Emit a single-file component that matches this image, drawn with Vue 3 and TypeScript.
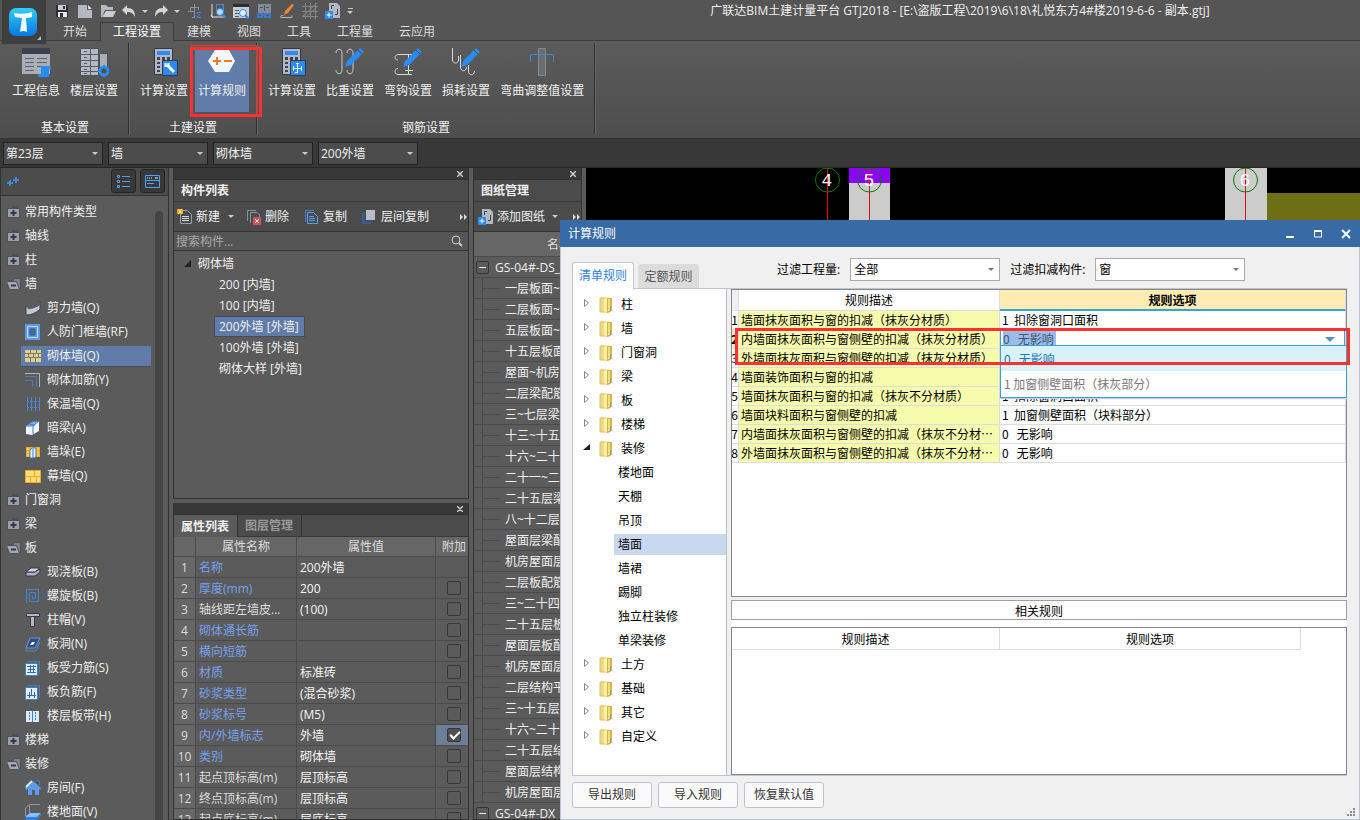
<script setup lang="ts">
import { ref } from 'vue'

interface SideRow {
  text: string
  icon: string
  child?: boolean
  active?: boolean
}
interface RibbonItem {
  text: string
  icon: string
  active?: boolean
}
interface PropRow {
  name: string
  value: string
  blue: boolean
  check: boolean | null
}
interface RuleRow {
  desc: string
  option: string
}

const pencil = '<path d="M10 20 12 14 25 1 29 5 16 18z" fill="#2a8bf2"/><path d="M23 3 27 7" stroke="#4d4d4d"/>'
const calc =
  '<path d="M5.500 1.500h18v26h-18z" fill="#b4b8c2" stroke="#333947"/><path d="M8 4h13v4H8z" fill="#2a8bf2"/><path d="M8 10h3v3H8zM13 10h3v3h-3zM18 10h3v3h-3zM8 15h3v2H8zM13 15h3v2h-3zM8 19h3v2H8zM8 23h3v2H8z" fill="#3e434e"/><path d="M13.500 13.500h15v15h-15z" fill="#2a8bf2" stroke="#333947"/>'

const icons: Record<string, string> = {
  save: '<path d="M2 2h11l1 1v11H2z" fill="#2b2e35"/><path d="M4 2h8v5H4z" fill="#c9ccd3"/><path d="M4 9h9v5H4z" fill="#e5e7ea"/><path d="M6 10h3v4H6z" fill="#333"/><path d="M9 3h2v3H9z" fill="#333"/>',
  file: '<path d="M1 2h9v5h5v8H1z" fill="#b4b8c2"/><path d="M11 2v4h4z" fill="#d8dae0"/>',
  open: '<path d="M1 2h5l2 2h5v3H5l-3 7H1z" fill="#b4b8c2"/><path d="M6 8h10l-3 6H2z" fill="#c9ccd3"/>',
  undo: '<path d="M1 7l5-5v3c6 0 8 3 8 9-2-4-4-5-8-5v3z" fill="#d2d5da"/>',
  redo: '<path d="M15 7l-5-5v3c-6 0-8 3-8 9 2-4 4-5 8-5v3z" fill="#d2d5da"/>',
  sum: '<path d="M7.500 1v13M3 4.500h9M3.500 4v4M11.500 4v3M1 8.500h6M5 14.500h3" stroke="#8b919c" fill="none"/><path d="M14 9.500H9.500l3 2.500-3 2.500h4.500" fill="none" stroke="#2a8bf2"/>',
  pick: '<path d="M2 1v13h12M1 12l2 3" stroke="#e3e5e8" fill="none"/><path d="M6 1h8v8H6z" fill="#5d87b5"/><path d="M7 3h6M7 5h6M7 7h6M8 2v7M11 2v7" stroke="#37485e"/><circle cx="10" cy="9" r="3.500" fill="#c9d6e6" stroke="#2a8bf2"/><path d="M12 11l4 4" stroke="#2a8bf2" stroke-width="2"/>',
  view: '<path d="M0 1h16v14H0z" fill="#c9ccd3"/><path d="M0 1h16v3H0z" fill="#2b2e35"/><path d="M2 7.500h4M2 10.500h4M2 13.500h4" stroke="#555"/><circle cx="10" cy="10" r="3.500" fill="#e7f3ff" stroke="#2a8bf2"/><path d="M12 12l4 4" stroke="#2a8bf2" stroke-width="2"/>',
  glasses: '<path d="M2 1h13v9H2z" fill="#868c97"/><path d="M4 4.500h3M8.500 2v6M10 4.500h3" stroke="#4c525e"/><path d="M2 11h4v3H2zM9 11h5v3H9zM6 12h3" fill="none" stroke="#3a7bc4" stroke-width="2"/>',
  brush: '<path d="M13 1l2 1-6 8-4 2 1-4z" fill="#f0862d"/><path d="M1.500 14.500c0-2 1-2 3-2M2 14.500h11v-2" stroke="#b4b8c2" fill="none"/>',
  grid: '<path d="M3.500 0v16M8.500 0v16M13.500 0v16M0 3.500h16M0 8.500h16M0 13.500h16M0 14 15 0M3 15 16 3" stroke="#858585" fill="none"/>',
  addpage: '<path d="M4 0h8l3 3v12H4z" fill="#b4b8c2"/><path d="M6.500 6V2.500H9M12.500 6v5.500H10" stroke="#444" fill="none"/><path d="M0 8h8v8H0z" fill="#2a8bf2"/><path d="M4 9.500v5M1.500 12h5" stroke="#fff"/>',
  info: '<path d="M1 1h28v26H1z" fill="#aaaeb7"/><path d="M1 1h28v6H1z" fill="#3b4150"/><path d="M4 11.500h9M4 15.500h9M4 19.500h9M4 23.500h9M16 11.500h10M16 15.500h10M16 19.500h4" stroke="#596070"/><path d="M20 19h10v3h-2v8H17v-3h3z" fill="#2a8bf2"/>',
  floors: '<path d="M1.500 1.500h18v27h-18z" fill="#b4b8c2" stroke="#4b505b"/><path d="M20.500 6.500h8v22h-8z" fill="#aaaeb7" stroke="#4b505b"/><path d="M1 7.500h18M1 13.500h18M1 19.500h18M1 24.500h18M11.500 1v28M5 4.500h3M5 10.500h3M5 16.500h3M5 22.500h3M5 26.500h3" stroke="#555a65"/><circle cx="25" cy="24" r="4" fill="#4d4d4d" stroke="#2a8bf2" stroke-width="3"/><path d="M25 18v2M25 28v2M19 24h2M29 24h2" stroke="#2a8bf2" stroke-width="2"/>',
  calcWrench: calc + '<path d="M18 18l7 7" stroke="#fff" stroke-width="3"/><path d="M16.500 16v3h3v-3" stroke="#fff" stroke-width="2" fill="none"/>',
  calcFork: calc + '<path d="M20.500 16v10M16 21.500h9M16.500 21v-2M16.500 22v2M24.500 19v5M19 16.500h3M18 25.500h3" stroke="#fff" fill="none"/>',
  hexa: '<path d="M8 3h14l6 11-6 11H8L1 14z" fill="#f1f7ff"/><path d="M6 14h8M10 10v8M17 14h8" stroke="#f07a1c" stroke-width="2"/><path d="M3 29.500h24" stroke="#3f8ae0"/>',
  weight: '<path d="M1 6c0-5 6-5 6 0v17c0 5-6 5-6 0M12 6c0-5 6-5 6 0v17c0 5-6 5-6 0" fill="none" stroke="#c8ccd4"/>' + pencil,
  hook: '<path d="M19 7.500H5C1 8 1 13 5 13M19 27.500H5c-4 0-4-6 0-6M15.500 8v20M11 17.500h4M12 23.500h8" fill="none" stroke="#d4d7dc"/>' + pencil,
  loss: '<path d="M1.500 1v12c0 4 6 4 6 0V9M9.500 8v12c0 5 6 5 6 0M17.500 18v6c0 5 6 5 6 0" fill="none" stroke="#d4d7dc"/>' + pencil,
  bend: '<path d="M11.500 1.500h7v27h-7z" fill="#676f74" stroke="#838b90"/><path d="M3.500 15V7.500h23V15" fill="none" stroke="#3d89d6"/>',
  closed: '<path d="M6 2h6v2H6z" fill="#4a505c"/><path d="M1.500 4.500h12v9h-12z" fill="#9a9ea8" stroke="#4a505c"/><path d="M7.500 6v6M4.500 9h6" stroke="#333844" stroke-width="2"/>',
  opened: '<path d="M2.500 4.500h5v-2h7v10h-4" fill="#7e838e" stroke="#4a505c"/><path d="M0.500 5.500h10l3 8h-10z" fill="#a4a8b2" stroke="#4a505c"/><path d="M5 9.500h5" stroke="#333844" stroke-width="2"/>',
  shear: '<path d="M1 6c6 1 10-1 14-5v8c-4 4-9 6-14 6z" fill="#c3c9d4" stroke="#3d4250"/><path d="M1 5c6 1 9-1 13-4l2 3c-4 4-9 5-13 5z" fill="#555b69"/>',
  frame: '<path d="M0 0h15v16H0z" fill="#5b9bea"/><path d="M2.500 2.500h10v11h-10z" fill="none" stroke="#bddbff"/><path d="M5 5h5v6H5z" fill="#596984" stroke="#2d5c9c"/>',
  brick: '<path d="M0 2h16v12H0z" fill="#dccd90"/><path d="M0 5.500h16M0 9.500h16M5.500 2v3M11.500 2v3M3.500 5v4M8.500 5v4M13.500 5v4M5.500 10v4M10.500 10v4" stroke="#787b65"/>',
  rebar: '<path d="M0 1.500h14.500V15" fill="none" stroke="#aeb4be"/><path d="M0 4.500h11.500V15M0 8.500h7.500V15" fill="none" stroke="#4d7db3"/>',
  insulation: '<path d="M2.500 1v14M6.500 1v14M10.500 1v14M14.500 1v14" stroke="#4887d2"/><path d="M3 5.500h11M3 11.500h11" stroke="#4887d2" stroke-dasharray="1 1"/>',
  beam: '<path d="M1 6l6-4 7-1v10l-7 4-6-1z" fill="#f2f7fd"/><path d="M1 6l6-4 7-1-6 5z" fill="#85b8ef"/><path d="M1 6l6-4 7-1-6 5zM4 4l6 1M8 6v8" fill="none" stroke="#3f7fc9"/>',
  pier: '<path d="M1 3h14v10H1z" fill="#f4b018"/><path d="M2 5h2M2 8h2M2 11h2M12 5h2M12 8h2M12 11h2" stroke="#ffe7a6"/><path d="M5 6l2-2h4v9l-2 1H5z" fill="#edf5ff" stroke="#397fca"/><path d="M8 5v9" stroke="#397fca"/>',
  curtain: '<path d="M0.500 2.500h15v12h-15z" fill="#ffdc80" stroke="#f3ac18"/><path d="M0 8.500h16M9.500 2v6M5.500 8v7M11.500 8v7" stroke="#f3ac18"/>',
  slab: '<path d="M1 8h9l5-3v3l-5 4H1z" fill="#aeb3be" stroke="#333843"/><path d="M1 8l5-4h9l-5 4z" fill="#d2d5dd" stroke="#333843"/>',
  spiral: '<path d="M1.500 15V1.500h12v12h-9v-9h6v6h-3v-3" fill="none" stroke="#3f87dc"/>',
  cap: '<path d="M1.500 1.500h13v3h-13zM5.500 4.500h4v10h-4z" fill="#b3b7c1" stroke="#353a45"/>',
  opening: '<path d="M5 2h10l-5 10H1z" fill="#314e75" stroke="#5a9cec"/><path d="M1 13v2h10l4-9" fill="none" stroke="#4887d2"/><path d="M5 9l2-3h3l-2 3z" fill="#fff"/>',
  stress: '<path d="M0.500 3.500h12v12h-12z" fill="#e3efff" stroke="#3f81c9"/><path d="M2 1.500h12.500V14" fill="none" stroke="#3f81c9"/><path d="M2 6.500h9M2 12.500h9M5.500 5v8M8.500 5v8M3 9.500h7" stroke="#376aa8" fill="none"/>',
  negative: '<path d="M0.500 3.500h12v12h-12z" fill="#e3efff" stroke="#3f81c9"/><path d="M2 1.500h12.500V14" fill="none" stroke="#3f81c9"/><path d="M2 11.500h9M4.500 8v6M6.500 5v6M9.500 8v6" stroke="#376aa8" fill="none"/>',
  band: '<path d="M1 3h13v11H1z" fill="#d8eaff"/><path d="M4.500 4v9M10.500 4v9" stroke="#3885d5" stroke-dasharray="2 1"/><path d="M7.500 3v11" stroke="#3885d5"/>',
  house: '<path d="M0 8l8-7 8 7-1 2-1-1v6h-4v-5H7v5H3V9l-2 1z" fill="#5c9cea"/><path d="M1 7l6-6" stroke="#d4e8ff" stroke-width="2"/><path d="M12 1h2v4" stroke="#5c9cea"/>',
  ground: '<path d="M0.500 12V4l4-3.500H15M4.500 1v8" stroke="#9199a5" fill="none"/><path d="M1 12l4-3h11l-4 4H1z" fill="#8bc0ff"/><path d="M0 13h12l4-4v3l-4 4H0z" fill="#327ecf"/>',
  create: '<path d="M3.500 1.500h7l4 4v9h-11z" fill="none" stroke="#8fa0ae"/><path d="M5 7.500h7M5 9.500h7M5 11.500h7" stroke="#d8dbe0"/><path d="M0 0h6v5H0z" fill="#ef9e26"/><path d="M1 0l4 5M5 0L1 5" stroke="#ffe0a0"/>',
  remove: '<path d="M1.500 12V1.500H10M4.500 14V3.500H11l2.500 2.500v2" fill="none" stroke="#7e93a5"/><path d="M7 8h8v8H7z" fill="#d35050"/><path d="M9 10l4 4M13 10l-4 4" stroke="#fff"/>',
  copy: '<path d="M1.500 13V1.500H10" fill="none" stroke="#3f7fc9"/><path d="M3.500 3.500h6l4 4v7h-10z" fill="none" stroke="#58a1ef"/><path d="M5 7.500h5M5 9.500h6M5 11.500h6" stroke="#58a1ef"/>',
  layercopy: '<path d="M4 1h9v10H4z" fill="#b8bdc9"/><path d="M3 5H1v9h7v-2" fill="none" stroke="#2f619b" stroke-width="2"/>',
  search: '<circle cx="6" cy="6" r="4" fill="none" stroke="#ccc"/><path d="M9 9l3 3" stroke="#ccc" stroke-width="2"/>',
  yellowfolder: '<path d="M2 1h7v14H2z" fill="#f0d986" stroke="#d8be60"/><path d="M6 2l4-2v16l-4-2z" fill="#fdf0a8"/><path d="M9 1h5v13l-4 2H9z" fill="#d6b545"/><path d="M10 2h2v12h-2z" fill="#f0dc84"/><path d="M12.500 10v4" stroke="#56a9ec"/>',
  plus2: '<path d="M0 9h6M3 6v6M6 6h6M9 3v6" stroke="#3d89e0" stroke-width="2"/>',
  listview: '<path d="M0.500 1.500h2v2h-2zM0.500 6.500h2v2h-2zM0.500 11.500h2v2h-2z" fill="none" stroke="#56a0f0"/><path d="M5 2.500h8M5 7.500h8M5 12.500h8" stroke="#56a0f0"/>',
  cardview: '<path d="M0.500 1.500h14v12h-14zM1 6.500h13M2 9.500h7" fill="none" stroke="#56a0f0"/><path d="M2 4h1M4 4h1M6 4h1M10 4h3" stroke="#56a0f0" stroke-width="2"/>',
  close: '<path d="M0 0l6 6M6 0L0 6" stroke="#ccc" stroke-width="1.500"/>',
}

const quick: string[] = ['save', 'file', 'open', 'undo', 'caret', 'redo', 'caret', 'sum', 'pick', 'view', 'glasses', 'brush', 'grid', 'addpage', 'menu']
const tabs: string[] = ['开始', '工程设置', '建模', '视图', '工具', '工程量', '云应用']
const ribbon: { title: string; items: RibbonItem[] }[] = [
  { title: '基本设置', items: [{ text: '工程信息', icon: 'info' }, { text: '楼层设置', icon: 'floors' }] },
  { title: '土建设置', items: [{ text: '计算设置', icon: 'calcWrench' }, { text: '计算规则', icon: 'hexa', active: true }] },
  {
    title: '钢筋设置',
    items: [
      { text: '计算设置', icon: 'calcFork' },
      { text: '比重设置', icon: 'weight' },
      { text: '弯钩设置', icon: 'hook' },
      { text: '损耗设置', icon: 'loss' },
      { text: '弯曲调整值设置', icon: 'bend' },
    ],
  },
]
const combos: { label: string; value: string }[] = [
  { label: '楼层', value: '第23层' },
  { label: '类别', value: '墙' },
  { label: '构件类型', value: '砌体墙' },
  { label: '构件', value: '200外墙' },
]

const side: SideRow[] = [
  { text: '常用构件类型', icon: 'closed' },
  { text: '轴线', icon: 'closed' },
  { text: '柱', icon: 'closed' },
  { text: '墙', icon: 'opened' },
  { text: '剪力墙(Q)', icon: 'shear', child: true },
  { text: '人防门框墙(RF)', icon: 'frame', child: true },
  { text: '砌体墙(Q)', icon: 'brick', child: true, active: true },
  { text: '砌体加筋(Y)', icon: 'rebar', child: true },
  { text: '保温墙(Q)', icon: 'insulation', child: true },
  { text: '暗梁(A)', icon: 'beam', child: true },
  { text: '墙垛(E)', icon: 'pier', child: true },
  { text: '幕墙(Q)', icon: 'curtain', child: true },
  { text: '门窗洞', icon: 'closed' },
  { text: '梁', icon: 'closed' },
  { text: '板', icon: 'opened' },
  { text: '现浇板(B)', icon: 'slab', child: true },
  { text: '螺旋板(B)', icon: 'spiral', child: true },
  { text: '柱帽(V)', icon: 'cap', child: true },
  { text: '板洞(N)', icon: 'opening', child: true },
  { text: '板受力筋(S)', icon: 'stress', child: true },
  { text: '板负筋(F)', icon: 'negative', child: true },
  { text: '楼层板带(H)', icon: 'band', child: true },
  { text: '楼梯', icon: 'closed' },
  { text: '装修', icon: 'opened' },
  { text: '房间(F)', icon: 'house', child: true },
  { text: '楼地面(V)', icon: 'ground', child: true },
]

const members: string[] = ['200 [内墙]', '100 [内墙]', '200外墙 [外墙]', '100外墙 [外墙]', '砌体大样 [外墙]']
const selectedMember = ref(2)

const props = ref<PropRow[]>([
  { name: '名称', value: '200外墙', blue: true, check: null },
  { name: '厚度(mm)', value: '200', blue: true, check: false },
  { name: '轴线距左墙皮...', value: '(100)', blue: false, check: false },
  { name: '砌体通长筋', value: '', blue: true, check: false },
  { name: '横向短筋', value: '', blue: true, check: false },
  { name: '材质', value: '标准砖', blue: true, check: false },
  { name: '砂浆类型', value: '(混合砂浆)', blue: true, check: false },
  { name: '砂浆标号', value: '(M5)', blue: true, check: false },
  { name: '内/外墙标志', value: '外墙', blue: true, check: true },
  { name: '类别', value: '砌体墙', blue: true, check: false },
  { name: '起点顶标高(m)', value: '层顶标高', blue: false, check: false },
  { name: '终点顶标高(m)', value: '层顶标高', blue: false, check: false },
  { name: '起点底标高(m)', value: '层底标高', blue: false, check: false },
])

const drawings: string[] = [
  '一层板面~二', '二层板面~四', '五层板面~十', '十五层板面', '屋面~机房', '二层梁配筋', '三~七层梁',
  '十三~十五', '十六~二十', '二十一~二', '二十五层梁', '八~十二层', '屋面层梁配', '机房屋面层',
  '二层板配筋', '三~二十四', '二十五层板', '屋面层板配', '机房屋面层', '二层结构平', '三~十五层',
  '十六~二十', '二十五层结', '屋面层结构', '机房屋面层',
]

const ruleTree: { text: string; kind: 'closed' | 'open' | 'leaf' }[] = [
  ...['柱', '墙', '门窗洞', '梁', '板', '楼梯'].map((text) => ({ text, kind: 'closed' as const })),
  { text: '装修', kind: 'open' },
  ...['楼地面', '天棚', '吊顶', '墙面', '墙裙', '踢脚', '独立柱装修', '单梁装修'].map((text) => ({ text, kind: 'leaf' as const })),
  ...['土方', '基础', '其它', '自定义'].map((text) => ({ text, kind: 'closed' as const })),
]
const selectedRule = ref('墙面')

const none = '0\u00a0\u00a0\u00a0无影响'
const rules: RuleRow[] = [
  { desc: '墙面抹灰面积与窗的扣减（抹灰分材质）', option: '1\u00a0\u00a0扣除窗洞口面积' },
  { desc: '内墙面抹灰面积与窗侧壁的扣减（抹灰分材质）', option: none },
  { desc: '外墙面抹灰面积与窗侧壁的扣减（抹灰分材质）', option: '' },
  { desc: '墙面装饰面积与窗的扣减', option: '' },
  { desc: '墙面抹灰面积与窗的扣减（抹灰不分材质）', option: '1\u00a0\u00a0扣除窗洞口面积' },
  { desc: '墙面块料面积与窗侧壁的扣减', option: '1\u00a0\u00a0加窗侧壁面积（块料部分）' },
  { desc: '内墙面抹灰面积与窗侧壁的扣减（抹灰不分材…', option: none },
  { desc: '外墙面抹灰面积与窗侧壁的扣减（抹灰不分材…', option: none },
]
</script>

<template>
  <div class="app" lang="zh-CN">
    <header class="top">
      <button class="logo" aria-label="应用菜单">
        <svg width="44" height="44" viewBox="0 0 44 44">
          <defs>
            <linearGradient id="lg" x1="0" y1="0" x2="0" y2="1">
              <stop offset="0" stop-color="#30cdf8" />
              <stop offset="1" stop-color="#0878e0" />
            </linearGradient>
          </defs>
          <rect x="7" y="8" width="28" height="28" rx="7" fill="url(#lg)" />
          <path d="M12 13q9 2 18-1v5q-3 1-6 1l1 14q-4-2-7 0l2-14-7-1z" fill="#f4fbff" />
          <path d="M39 36v4h-4z" fill="#bbb" />
        </svg>
      </button>
      <div class="top-main">
        <div class="titlebar">
          <div class="quick">
            <template v-for="(q, i) in quick" :key="i">
              <button v-if="q === 'caret'" class="qcaret" aria-label="更多"><i class="caret"></i></button>
              <button v-else-if="q === 'menu'" class="qcaret qmenu" aria-label="自定义工具栏"><i class="caret"></i></button>
              <button v-else class="q" :class="'q-' + q" :aria-label="q">
                <svg width="16" height="16" viewBox="0 0 16 16" v-html="icons[q]"></svg>
              </button>
            </template>
          </div>
          <h1>广联达BIM土建计量平台 GTJ2018 - [E:\盗版工程\2019\6\18\礼悦东方4#楼2019-6-6 - 副本.gtj]</h1>
        </div>
        <nav class="tabs">
          <button v-for="t in tabs" :key="t" :class="{ on: t === '工程设置' }">{{ t }}</button>
        </nav>
      </div>
    </header>

    <section class="ribbon">
      <div v-for="g in ribbon" :key="g.title" class="rgroup">
        <div class="ritems">
          <button v-for="it in g.items" :key="it.text" class="ritem" :class="{ active: it.active }">
            <svg width="30" height="30" viewBox="0 0 30 30" v-html="icons[it.icon]"></svg>
            <span>{{ it.text }}</span>
            <template v-if="it.active">
              <i class="mark thin"></i>
              <i class="mark"></i>
            </template>
          </button>
        </div>
        <div class="rtitle">{{ g.title }}</div>
      </div>
    </section>

    <section class="combobar">
      <label v-for="c in combos" :key="c.label" class="combo">
        <select :aria-label="c.label"><option>{{ c.value }}</option></select>
      </label>
    </section>

    <main class="work">
      <aside class="side">
        <div class="side-bar">
          <svg width="14" height="14" viewBox="0 0 14 14" v-html="icons.plus2"></svg>
          <span class="grow"></span>
          <button aria-label="列表"><svg width="14" height="14" viewBox="0 0 14 14" v-html="icons.listview"></svg></button>
          <button aria-label="卡片"><svg width="16" height="14" viewBox="0 0 16 14" v-html="icons.cardview"></svg></button>
        </div>
        <div class="side-body">
          <div class="side-list">
            <button v-for="s in side" :key="s.text" :class="{ child: s.child, active: s.active }">
              <svg width="16" height="16" viewBox="0 0 16 16" v-html="icons[s.icon]"></svg>{{ s.text }}
            </button>
          </div>
          <div class="thumb"></div>
        </div>
      </aside>

      <div class="column">
        <section class="panel members">
          <div class="strip"><button aria-label="关闭"><svg width="6" height="6" viewBox="0 0 6 6" v-html="icons.close"></svg></button></div>
          <h2>构件列表</h2>
          <div class="tools">
            <button><svg width="16" height="16" viewBox="0 0 16 16" v-html="icons.create"></svg>新建<i class="caret"></i></button>
            <button><svg width="16" height="16" viewBox="0 0 16 16" v-html="icons.remove"></svg>删除</button>
            <button><svg width="16" height="16" viewBox="0 0 16 16" v-html="icons.copy"></svg>复制</button>
            <button><svg width="16" height="16" viewBox="0 0 16 16" v-html="icons.layercopy"></svg>层间复制</button>
            <span class="grow"></span>
            <svg class="more" width="8" height="6" viewBox="0 0 8 6"><path d="M0 0l3 3-3 3zM4 0l3 3-3 3z" fill="#ddd" /></svg>
          </div>
          <div class="search">
            <input type="text" placeholder="搜索构件..." aria-label="搜索构件" />
            <svg width="14" height="14" viewBox="0 0 14 14" v-html="icons.search"></svg>
          </div>
          <div class="tree">
            <button class="root"><svg width="7" height="7" viewBox="0 0 7 7"><path d="M7 0v7H0z" fill="#222" /></svg>砌体墙</button>
            <button v-for="(m, i) in members" :key="m" :class="{ active: i === selectedMember }" @click="selectedMember = i">{{ m }}</button>
          </div>
        </section>

        <section class="panel properties">
          <div class="strip"><button aria-label="关闭"><svg width="6" height="6" viewBox="0 0 6 6" v-html="icons.close"></svg></button></div>
          <div class="ptabs"><button class="on">属性列表</button><button>图层管理</button></div>
          <table>
            <colgroup><col class="c1" /><col class="c2" /><col /><col class="c4" /></colgroup>
            <thead><tr><th></th><th>属性名称</th><th>属性值</th><th>附加</th></tr></thead>
            <tbody>
              <tr v-for="(p, i) in props" :key="p.name">
                <td class="num">{{ i + 1 }}</td>
                <td :class="{ blue: p.blue }">{{ p.name }}</td>
                <td class="val">{{ p.value }}</td>
                <td class="chk" :class="{ hot: p.check }">
                  <input v-if="p.check !== null" v-model="p.check" type="checkbox" :aria-label="p.name" />
                </td>
              </tr>
            </tbody>
          </table>
        </section>
      </div>

      <section class="panel drawings">
        <div class="strip"><button aria-label="关闭"><svg width="6" height="6" viewBox="0 0 6 6" v-html="icons.close"></svg></button></div>
        <h2>图纸管理</h2>
        <div class="tools">
          <button><svg width="16" height="16" viewBox="0 0 16 16" v-html="icons.addpage"></svg>添加图纸<i class="caret"></i></button>
          <span class="grow"></span>
          <svg class="more" width="8" height="6" viewBox="0 0 8 6"><path d="M0 0l3 3-3 3zM4 0l3 3-3 3z" fill="#ddd" /></svg>
        </div>
        <div class="dhead">名称</div>
        <ul>
          <li class="top-row"><i class="minus"></i>GS-04#-DS_</li>
          <li v-for="(d, i) in drawings" :key="i"><i class="branch"></i>{{ d }}</li>
          <li class="top-row"><i class="minus"></i>GS-04#-DX_</li>
        </ul>
      </section>

      <section class="canvas">
        <svg width="100%" height="100%">
          <rect x="263" y="0" width="41" height="60" fill="#cccccc" />
          <rect x="263" y="0" width="41" height="15" fill="#8b00ff" />
          <rect x="639" y="0" width="42" height="60" fill="#cccccc" />
          <rect x="681" y="25" width="100%" height="40" fill="#6e6e14" />
          <g v-for="a in [{ x: 241, n: '4' }, { x: 283, n: '5' }, { x: 659, n: '6' }]" :key="a.n">
            <path :d="`M${a.x + 0.5} 0v60`" stroke="#ff0000" />
            <circle :cx="a.x + 0.5" cy="12" r="12" fill="none" stroke="#008000" />
            <text :x="a.x" y="18" text-anchor="middle">{{ a.n }}</text>
          </g>
        </svg>
      </section>
    </main>

    <section class="dialog" role="dialog" aria-label="计算规则">
      <div class="dtitle">
        <span class="grow">计算规则</span>
        <button aria-label="最小化"><svg width="10" height="10" viewBox="0 0 10 10"><path d="M1 8h8" stroke="#fff" stroke-width="2" /></svg></button>
        <button aria-label="最大化"><svg width="10" height="10" viewBox="0 0 10 10"><path d="M1.500 2h7v6h-7z" fill="none" stroke="#fff" /><path d="M1 2h8" stroke="#fff" stroke-width="2" /></svg></button>
        <button aria-label="关闭"><svg width="10" height="10" viewBox="0 0 10 10"><path d="M1 1l8 8M9 1L1 9" stroke="#fff" stroke-width="2" /></svg></button>
      </div>
      <div class="dbody">
        <div class="dtop">
          <button class="dtab on">清单规则</button>
          <button class="dtab">定额规则</button>
          <div class="filters">
            <label for="f1">过滤工程量:</label>
            <span class="pick"><select id="f1"><option>全部</option></select></span>
            <label for="f2">过滤扣减构件:</label>
            <span class="pick"><select id="f2"><option>窗</option></select></span>
          </div>
        </div>
        <div class="dmain">
          <div class="rtree">
            <button v-for="r in ruleTree" :key="r.text" :class="[r.kind, { active: r.text === selectedRule }]" @click="selectedRule = r.text">
              <template v-if="r.kind !== 'leaf'">
                <svg class="arrow" width="8" height="8" viewBox="0 0 8 8">
                  <path v-if="r.kind === 'open'" d="M7 1v6H0z" fill="#222" />
                  <path v-else d="M1.500 0.500l4 3.500-4 3.500z" fill="#fff" stroke="#888" />
                </svg>
                <svg width="16" height="16" viewBox="0 0 16 16" v-html="icons.yellowfolder"></svg>
              </template>{{ r.text }}
            </button>
          </div>
          <div class="dright">
            <div class="grid main-grid">
              <table>
                <colgroup><col class="g1" /><col class="g2" /><col /></colgroup>
                <thead><tr><th class="corner"></th><th>规则描述</th><th class="hot">规则选项</th></tr></thead>
                <tbody>
                  <tr v-for="(r, i) in rules" :key="i" :class="{ current: i === 1 }">
                    <td class="n">{{ i + 1 }}</td>
                    <td class="desc">{{ r.desc }}</td>
                    <td v-if="i === 1" class="edit">
                      <div class="editor">
                        <input type="text" :value="r.option" aria-label="规则选项" />
                        <i class="drop"></i>
                      </div>
                      <ul class="popup" role="listbox">
                        <li class="on" role="option" aria-selected="true">0&nbsp;&nbsp;&nbsp;无影响</li>
                        <li role="option">1 加窗侧壁面积（抹灰部分）</li>
                      </ul>
                    </td>
                    <td v-else>{{ r.option }}</td>
                  </tr>
                </tbody>
              </table>
              <i class="mark2"></i>
            </div>
            <div class="related">相关规则</div>
            <div class="grid sub-grid">
              <table>
                <colgroup><col class="s1" /><col class="s2" /></colgroup>
                <thead><tr><th>规则描述</th><th>规则选项</th></tr></thead>
              </table>
            </div>
          </div>
        </div>
        <footer>
          <button>导出规则</button>
          <button>导入规则</button>
          <button>恢复默认值</button>
          <span class="grow"></span>
          <svg class="grip" width="8" height="8" viewBox="0 0 8 8"><path d="M6 0h2v2H6zM3 3h2v2H3zM6 3h2v2H6zM0 6h2v2H0zM3 6h2v2H3zM6 6h2v2H6z" fill="#888" /></svg>
        </footer>
      </div>
    </section>
  </div>
</template>

<style>
html, body { margin: 0; overflow: hidden; background: #5b5b5b; }
</style>

<style scoped>
* { box-sizing: border-box; }
button { font: inherit; color: inherit; background: none; border: 0; padding: 0; margin: 0; text-align: left; white-space: nowrap; }
svg { flex: none; display: block; }
i { display: block; flex: none; }
ul { margin: 0; padding: 0; list-style: none; }
select, input { font: inherit; color: inherit; margin: 0; border-radius: 0; outline: none; }
.grow { flex: 1; }
.caret { width: 0; height: 0; border: 3px solid transparent; border-top-color: #ccc; border-bottom: 0; }
.app { position: relative; height: 100vh; display: flex; flex-direction: column; overflow: hidden; font: 12px/18px "Open Sans", "Noto Sans CJK SC", sans-serif; color: #f0f0f0; background: #5b5b5b; }

.top { position: relative; z-index: 1; display: flex; height: 41px; background: #555; border-bottom: 1px solid #3c3c3c; }
.logo { width: 44px; height: 44px; margin-left: 2px; background: #3f3f3f; }
.top-main { flex: 1; display: flex; flex-direction: column; }
.titlebar { display: flex; height: 22px; }
.quick { display: flex; align-items: center; padding-left: 4px; }
.q { width: 23px; display: flex; justify-content: center; }
.q-undo, .q-redo { width: 20px; }
.qcaret { width: 12px; display: flex; flex-direction: column; align-items: center; gap: 2px; }
.qmenu::before { content: ""; width: 5px; height: 1px; background: #ccc; }
h1 { flex: 1; margin: 0; padding-left: 204px; text-align: center; font-size: 12px; line-height: 22px; font-weight: 400; white-space: nowrap; }
.tabs { display: flex; padding-left: 4px; }
.tabs button { height: 19px; padding: 0 13px; line-height: 20px; color: #ddd; }
.tabs .on { background: #5b5b5b; border: 1px solid #3c3c3c; border-bottom: 0; padding: 0 12px; line-height: 18px; color: #fff; }

.ribbon { display: flex; height: 98px; padding-left: 1px; background: linear-gradient(#5b5b5b, #4e4e4e); border-bottom: 1px solid #333; }
.rgroup { margin: 2px 0 3px; padding: 0 5px 0 6px; border-right: 1px solid #303030; box-shadow: 1px 0 #666; display: flex; flex-direction: column; }
.ritems { display: flex; flex: 1; }
.ritem { position: relative; min-width: 58px; padding: 4px 5px 0; height: 70px; display: flex; flex-direction: column; align-items: center; }
.ritem span { line-height: 18px; margin-top: 5px; }
.ritem.active::before { content: ""; position: absolute; inset: 4px 2px 0 2px; background: #617ca8; border-bottom: 1px solid #46566f; }
.ritem.active svg, .ritem.active span { position: relative; }
.mark { position: absolute; left: -3px; top: 4px; width: 72px; height: 70px; border: 3px solid #ff3030; z-index: 2; }
.mark.thin { left: -2px; top: 2px; width: 66px; border-width: 1px; }
.rtitle { text-align: center; line-height: 15px; height: 15px; }

.combobar { display: flex; gap: 5px; padding: 3px 0 0 3px; height: 29px; background: #383838; border-bottom: 1px solid #262626; }
.combo { position: relative; width: 100px; height: 23px; }
.combo select { appearance: none; width: 100%; height: 23px; padding: 0 0 0 2px; background: #4c4c4c; border: 1px solid #222; }
.combo::after, .pick::after { content: ""; position: absolute; right: 5px; top: 10px; border: 3px solid transparent; border-top-color: #ccc; border-bottom: 0; }

.work { flex: 1; min-height: 0; display: flex; gap: 4px; }
.side { width: 169px; border: 1px solid #333; border-width: 0 1px; display: flex; flex-direction: column; background: #5b5b5b; }
.side-bar { height: 28px; display: flex; align-items: center; gap: 4px; padding: 0 3px 2px 6px; background: #4b4b4b; border-bottom: 1px solid #333; }
.side-bar button { width: 25px; height: 24px; display: flex; align-items: center; justify-content: center; background: #383838; border: 1px solid #252525; border-radius: 3px; }
.side-body { flex: 1; min-height: 0; display: flex; overflow: hidden; }
.side-list { width: 150px; padding-top: 4px; display: flex; flex-direction: column; }
.side-list button { flex: none; display: flex; align-items: center; gap: 3px; height: 24px; padding-left: 5px; }
.side-list .child { gap: 6px; margin: 2px 0 2px 20px; padding-left: 4px; height: 20px; }
.side-list .active { background: #617ca8; box-shadow: 0 1px #454d5b; }
.thumb { width: 8px; margin: 15px 0 0 4px; border-radius: 4px 4px 0 0; background: #444; }

.column { width: 296px; display: flex; flex-direction: column; gap: 4px; }
.panel { border: 1px solid #333; border-top: 0; background: #5b5b5b; display: flex; flex-direction: column; overflow: hidden; }
.strip { height: 12px; flex: none; background: #383838; border-bottom: 1px solid #303030; display: flex; align-items: center; justify-content: flex-end; padding-right: 5px; }
h2 { flex: none; margin: 0; height: 22px; padding-left: 7px; font-size: 12px; line-height: 22px; background: #4b4b4b; border-bottom: 1px solid #383838; }
.tools { flex: none; display: flex; align-items: center; gap: 15px; height: 30px; padding: 0 0 0 3px; background: #4b4b4b; border-bottom: 1px solid #333; }
.tools button { display: flex; align-items: center; gap: 3px; }
.tools .caret { margin-left: 5px; margin-right: -3px; }
.members { height: 331px; flex: none; }
.search { display: flex; align-items: center; height: 19px; background: #555; border-bottom: 1px solid #333; padding-right: 4px; }
.search input { flex: 1; min-width: 0; height: 18px; padding: 1px 2px 0; border: 0; background: none; }
.search input::placeholder { color: #aaa; opacity: 1; }
.tree { padding-top: 2px; display: flex; flex-direction: column; align-items: flex-start; }
.tree button { height: 21px; padding: 0 5px 0 4px; margin-left: 40px; line-height: 19px; border: 1px solid transparent; }
.tree .root { display: flex; align-items: center; gap: 7px; margin-left: 5px; }
.tree .active { background: #617ca8; border-color: #454d5b; }

.properties { flex: 1; min-height: 0; }
.ptabs { flex: none; display: flex; height: 22px; background: #4b4b4b; border-bottom: 1px solid #383838; font-weight: 700; }
.ptabs button { padding: 0 8px 0 7px; color: #999; border-right: 1px solid #333; line-height: 21px; }
.ptabs .on { background: #5b5b5b; color: #f0f0f0; height: 22px; }
table { border-collapse: separate; border-spacing: 0; table-layout: fixed; width: 100%; }
.properties .c1 { width: 22px; }
.properties .c2 { width: 101px; }
.properties .c4 { width: 32px; }
.properties th { height: 20px; padding: 1px 0 0; background: #666; font-weight: 400; color: #ddd; border: solid #4c4c4c; border-width: 0 1px 1px 0; white-space: nowrap; }
.properties th:last-child { padding-left: 6px; text-align: left; border-right: 0; }
.properties td { height: 21px; padding: 2px 0 0 3px; line-height: 18px; border: solid #4a4a4a; border-width: 0 1px 1px 0; white-space: nowrap; color: #ddd; }
.properties td.num { padding: 2px 0 0; text-align: center; background: #666; }
.properties td.blue { color: #76a1ee; }
.properties td.val { color: #f6f6f6; }
.properties td.chk { padding: 0 0 0 4px; text-align: center; border-right: 0; }
.properties td.hot { background: #6d7f98; }
.chk input { appearance: none; display: block; width: 14px; height: 14px; margin: 0 auto; border: 1px solid #363636; border-radius: 2px; background: #5b5b5b; }
.chk input:checked { background: #505050; }
.chk input:checked::after { content: ""; display: block; width: 4px; height: 8px; margin: 0 4px; border: solid #fff; border-width: 0 2px 2px 0; transform: rotate(45deg); }

.drawings { width: 109px; }
.drawings .tools { gap: 4px; padding-left: 4px; }
.drawings .tools .caret { margin: 0 0 0 4px; }
.dhead { flex: none; height: 25px; line-height: 25px; padding-left: 73px; background: #666; border-bottom: 1px solid #4a4a4a; color: #ddd; }
.drawings li { height: 21px; line-height: 21px; display: flex; align-items: center; white-space: nowrap; border-bottom: 1px solid #4a4a4a; }
.minus { width: 13px; height: 13px; margin: 0 6px 0 2px; border: 1px solid #333; border-radius: 2px; display: flex; align-items: center; justify-content: center; }
.minus::before { content: ""; width: 7px; height: 1px; background: #eee; }
.branch { width: 18px; height: 21px; margin-left: 8px; margin-right: 5px; border-left: 1px solid #4a4a4a; display: flex; align-items: center; }
.branch::before { content: ""; width: 100%; height: 1px; background: #4a4a4a; }
.canvas { flex: 1; min-width: 0; background: #000; }
.canvas text { fill: #fff; font: 18px "Liberation Mono", monospace; }

.dialog { position: absolute; left: 560px; right: 0; top: 220px; bottom: 0; display: flex; flex-direction: column; background: #f0f0f0; color: #000; border: 1px solid #b9c3d8; border-top: 0; }
.dtitle { display: flex; align-items: center; gap: 18px; height: 27px; margin: 0 -1px; padding: 0 9px 0 8px; background: #386aa5; color: #fff; flex: none; }
.dbody { flex: 1; min-height: 0; display: flex; flex-direction: column; padding: 11px 12px 11px 11px; }
.dtop { flex: none; display: flex; align-items: flex-end; gap: 4px; height: 30px; }
.dtab { height: 24px; width: 61px; text-align: center; background: #dcdcdc; color: #555; border-radius: 3px 3px 0 0; line-height: 26px; }
.dtab.on { position: relative; z-index: 1; height: 27px; width: 62px; margin-bottom: -1px; background: #fff; border: 1px solid #c0c4cc; border-bottom: 0; color: #2f82e6; line-height: 26px; }
.filters { display: flex; align-items: center; align-self: flex-start; margin-left: 74px; }
.filters label + .pick { margin-left: 10px; }
.filters .pick + label { margin-left: 10px; }
.pick { position: relative; width: 150px; height: 23px; }
.pick select { appearance: none; width: 100%; height: 23px; padding: 0 3px; background: #fff; border: 1px solid #aaa; }
.pick::after { border-top-color: #777; right: 6px; }
.dmain { flex: 1; min-height: 0; display: flex; gap: 4px; border: 1px solid #c0c4cc; border-width: 1px 0 1px 1px; }
.rtree { width: 154px; padding-top: 4px; background: #fff; border-right: 1px solid #b8bcc4; display: flex; flex-direction: column; overflow: hidden; }
.rtree button { display: flex; align-items: center; gap: 7px; height: 24px; padding-left: 10px; flex: none; }
.rtree .arrow { margin-top: -4px; }
.rtree .leaf { height: 21px; margin: 1px 0 2px 41px; padding-left: 4px; }
.rtree .active { background: #c8d8ee; }
.dright { flex: 1; min-width: 0; display: flex; flex-direction: column; font-family: "Noto Sans CJK SC", sans-serif; }
.grid { position: relative; background: #fff; border: 1px solid #828790; }
.grid th, .grid td { padding: 0; white-space: nowrap; }
.grid th { font-weight: 400; border: solid #ddd; border-width: 0 1px 1px 0; }
.main-grid { flex: 309; }
.g1 { width: 7px; }
.g2 { width: 261px; }
.main-grid th { height: 21px; }
.main-grid .corner { background: #f0f0f0; }
.main-grid th.hot { background: #ffecb3; font-weight: 700; border-bottom: 2px solid #35a5d1; }
.main-grid td { height: 19px; line-height: 18px; padding-left: 2px; border: solid #ddd; border-width: 0 1px 1px 0; }
.main-grid td.n { padding: 0; text-align: center; text-indent: -1px; }
.main-grid td.desc { background: #f7fbac; }
.current .n { font-weight: 700; background: #ffecb3; }
.main-grid td.edit { position: relative; padding: 0; }
.editor { display: flex; align-items: center; justify-content: space-between; height: 18px; padding: 0 9px 0 2px; border-left: 1px solid #35a5d1; border-right: 1px solid #35a5d1; }
.editor input { width: 53px; height: 16px; padding: 0; border: 0; background: #9cbce8; color: #44546b; }
.drop { border: 5px solid transparent; border-top-color: #4f94c7; border-bottom: 0; }
.popup { position: absolute; z-index: 2; left: 0; right: -2px; top: 15px; height: 53px; background: #fff; border: 1px solid #35a5d1; box-shadow: 0 1px 1px #c4cde8; color: #777; }
.popup li { height: 25px; line-height: 25px; padding-left: 3px; }
.popup .on { background: #d9f2f9; color: #1a79be; }
.mark2 { position: absolute; z-index: 3; left: 3px; right: -4px; top: 38px; height: 37px; border: 3px solid #ff3030; }
.related { height: 20px; line-height: 19px; margin: 3px 0 7px; box-shadow: 0 7px #fff; background: #fff; border: 1px solid #a0a0a0; text-align: center; flex: none; }
.sub-grid { flex: 147; }
.sub-grid table { width: 569px; }
.sub-grid th { height: 22px; }
.s1 { width: 268px; }
footer { display: flex; gap: 6px; flex: none; padding-top: 6px; }
footer button { width: 80px; height: 26px; text-align: center; color: #333; background: #fafafa; border: 1px solid #b9c3d8; border-radius: 3px; }
.grip { align-self: flex-end; margin: 0 -8px -8px 0; }
</style>
